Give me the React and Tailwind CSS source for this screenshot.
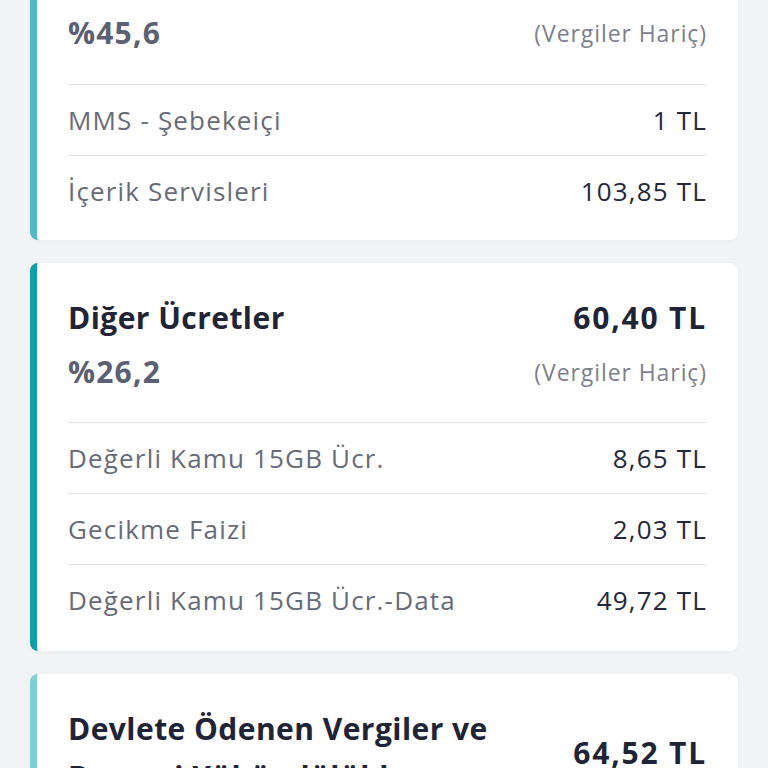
import React from "react";

const cards = [
  {
    accent: "border-l-[#52b9c3]",
    offset: "-mt-[21px]",
    bottom: "pb-[13px]",
    percent: "%45,6",
    rows: [
      { label: "MMS - Şebekeiçi", value: "1 TL" },
      { label: "İçerik Servisleri", value: "103,85 TL" },
    ],
  },
  {
    accent: "border-l-[#129ea6]",
    offset: "mt-[23px]",
    bottom: "pb-[15px]",
    title: "Diğer Ücretler",
    total: "60,40 TL",
    percent: "%26,2",
    rows: [
      { label: "Değerli Kamu 15GB Ücr.", value: "8,65 TL" },
      { label: "Gecikme Faizi", value: "2,03 TL" },
      { label: "Değerli Kamu 15GB Ücr.-Data", value: "49,72 TL" },
    ],
  },
  {
    accent: "border-l-[#80cfd4]",
    offset: "mt-[23px]",
    bottom: "pb-[15px]",
    title: "Devlete Ödenen Vergiler ve Benzeri Yükümlülükler",
    total: "64,52 TL",
    rows: [],
  },
];

function Card({ card }) {
  return (
    <div className={`${card.offset} ${card.bottom} mx-[30px] bg-white rounded-lg border-l-[7px] ${card.accent} shadow-[0_1px_4px_rgba(0,0,0,0.04)] pl-[31px] pr-[31px]`}>
      {card.title && (
        <div className="flex items-center justify-between gap-6 pt-[31px]">
          <div className="text-[30px] leading-[48px] font-bold tracking-[0.015em] text-[#1f2437] max-w-[440px]">{card.title}</div>
          <div className="text-[30px] leading-[48px] font-bold tracking-[0.06em] text-[#1f2437] whitespace-nowrap">{card.total}</div>
        </div>
      )}
      {card.percent && (
        <div className={`flex items-center justify-between ${card.title ? "mt-[12px] pb-[32px]" : "pt-[36px] pb-[33px]"} border-b border-[#e4e5e9]`}>
          <div className="text-[30px] leading-[36px] font-bold tracking-[0.04em] text-[#5b6072]">{card.percent}</div>
          <div className="text-[23px] leading-[36px] tracking-[0.04em] text-[#7c808c]">(Vergiler Hariç)</div>
        </div>
      )}
      {card.rows.map((r, i) => (
        <div
          key={i}
          className={`flex items-center justify-between h-[71px] ${i < card.rows.length - 1 ? "border-b border-[#e4e5e9]" : ""}`}
        >
          <div className="text-[26px] tracking-[0.045em] text-[#676b78]">{r.label}</div>
          <div className="text-[26px] font-medium tracking-[0.045em] text-[#23283a]">{r.value}</div>
        </div>
      ))}
    </div>
  );
}

export default function App() {
  return (
    <div className="min-h-screen h-[768px] overflow-hidden bg-[#f2f3f5]" style={{ fontFamily: "'Open Sans', 'Noto Sans', sans-serif" }}>
      {cards.map((c, i) => (
        <Card key={i} card={c} />
      ))}
    </div>
  );
}
